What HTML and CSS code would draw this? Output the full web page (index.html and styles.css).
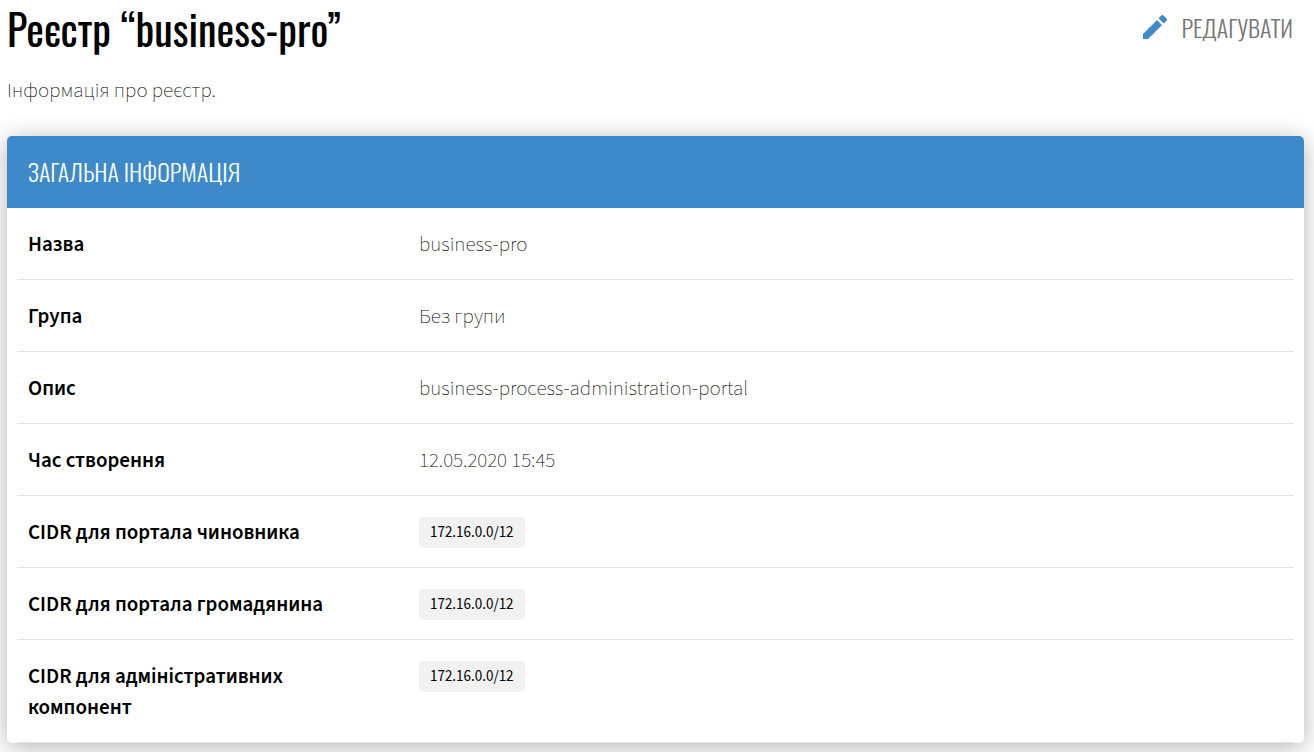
FILE: index.html
```
<!DOCTYPE html>
<html lang="uk">
<head>
  <meta charset="UTF-8">
  <meta name="viewport" content="width=device-width, initial-scale=1.0">
  <title>Реєстр “business-pro”</title>
  <link rel="stylesheet" href="styles.css">
</head>
<body>
  <main class="page">
    <header class="page-header">
      <h1 class="page-title">Реєстр “business-pro”</h1>
      <button type="button" class="edit-button">
        <svg class="edit-icon" viewBox="0 0 24 24" aria-hidden="true">
          <path d="M0 19v5h5L19 10l-5-5zM23.600 5.600a1.400 1.400 0 0 0 0-2L20.400.4a1.400 1.400 0 0 0-2 0L15.500 3.300l5.200 5.200z"/>
        </svg>
        <span>РЕДАГУВАТИ</span>
      </button>
    </header>

    <p class="page-description">Інформація про реєстр.</p>

    <section class="card">
      <h2 class="card-title">ЗАГАЛЬНА ІНФОРМАЦІЯ</h2>
      <dl class="info-list">
        <div class="info-row">
          <dt>Назва</dt>
          <dd>business-pro</dd>
        </div>
        <div class="info-row">
          <dt>Група</dt>
          <dd>Без групи</dd>
        </div>
        <div class="info-row">
          <dt>Опис</dt>
          <dd>business-process-administration-portal</dd>
        </div>
        <div class="info-row">
          <dt>Час створення</dt>
          <dd>12.05.2020 15:45</dd>
        </div>
        <div class="info-row">
          <dt>CIDR для портала чиновника</dt>
          <dd><span class="cidr">172.16.0.0/12</span></dd>
        </div>
        <div class="info-row">
          <dt>CIDR для портала громадянина</dt>
          <dd><span class="cidr">172.16.0.0/12</span></dd>
        </div>
        <div class="info-row">
          <dt>CIDR для адміністративних компонент</dt>
          <dd><span class="cidr">172.16.0.0/12</span></dd>
        </div>
      </dl>
    </section>
  </main>
</body>
</html>
```
FILE: styles.css
```
* {
  box-sizing: border-box;
}
body {
  margin: 0;
  background: #fff;
  color: #000;
  font-family: "Source Sans 3", "Noto Sans CJK SC", "Noto Sans", sans-serif;
  font-size: 21px;
  line-height: 31px;
}
.page {
  padding: 0 10px 9px 7px;
}
.page-header {
  display: flex;
  justify-content: space-between;
  align-items: center;
}
.page-title {
  margin: 0;
  font-family: "Oswald", "Roboto", sans-serif;
  font-size: 42px;
  font-weight: 400;
  line-height: 56px;
}
.edit-button {
  display: flex;
  align-items: center;
  gap: 14px;
  padding: 0 11px 2px 0;
  border: none;
  background: none;
  color: #757575;
  font-family: "Oswald", "Roboto", sans-serif;
  font-size: 24px;
  font-weight: 300;
  cursor: pointer;
}
.edit-icon {
  width: 24px;
  height: 24px;
  fill: #3d89c9;
}
.page-description {
  margin: 19px 0 30px;
  font-weight: 250;
}
.card {
  border-radius: 5px;
  box-shadow: 0 4px 24px rgba(0, 0, 0, 0.3);
}
.card-title {
  margin: 0;
  padding: 0 21px 2px;
  border-radius: 5px 5px 0 0;
  background: #3d89c9;
  color: #fff;
  font-family: "Oswald", "Roboto", sans-serif;
  font-size: 24px;
  font-weight: 300;
  line-height: 70px;
}
.info-list {
  margin: 0;
  padding: 0 10px;
}
.info-row {
  display: grid;
  grid-template-columns: 370px 1fr;
  column-gap: 21px;
  padding: 21px 11px 19px;
  border-bottom: 1px solid #e0e0e6;
}
dt {
  max-width: 300px;
  font-weight: 650;
}
dd {
  margin: 0;
  font-weight: 250;
}
.cidr {
  display: block;
  width: fit-content;
  padding: 0 11px;
  border-radius: 5px;
  background: #f1f1f1;
  font-size: 15px;
  font-weight: 400;
}
```
